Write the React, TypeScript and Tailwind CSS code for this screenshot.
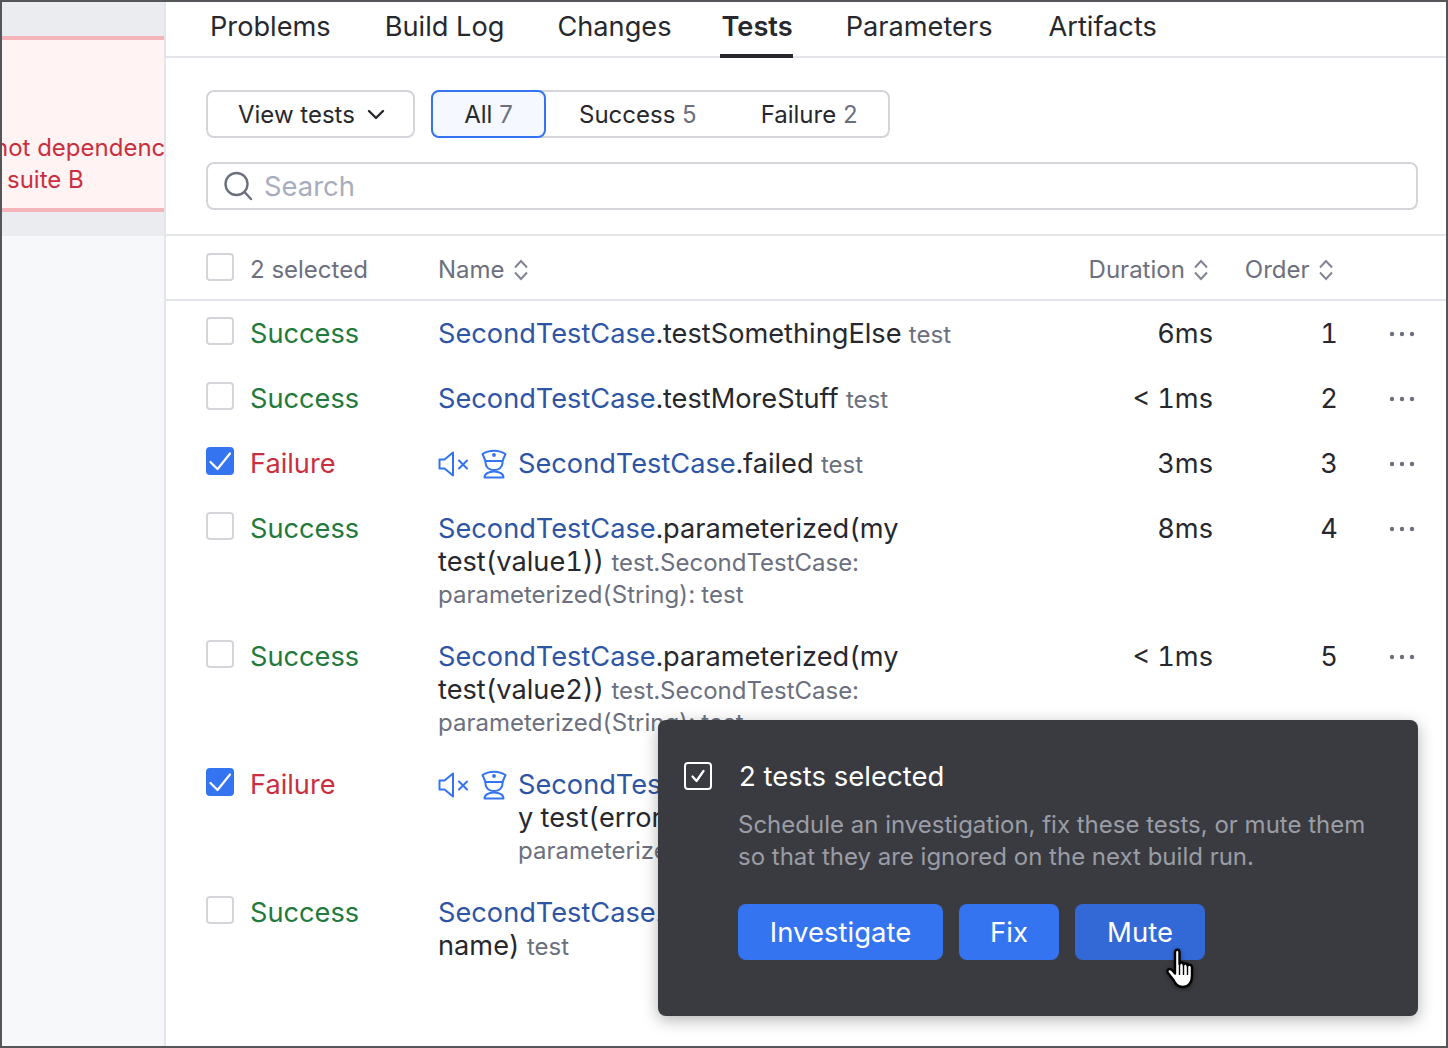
import React from "react";

const Cb = ({ checked }: { checked?: boolean }) =>
  checked ? (
    <div className="w-[28px] h-[28px] rounded-[4px] bg-[#3574f0] shrink-0">
      <svg width="28" height="28" viewBox="0 0 28 28" fill="none" stroke="#fff" strokeWidth="2.2" strokeLinecap="round" strokeLinejoin="round"><path d="M4.5 15 L11.5 22 L24 6.5" /></svg>
    </div>
  ) : (
    <div className="w-[28px] h-[28px] rounded-[4px] border-2 border-[#d3d5db] bg-white shrink-0" />
  );

const Sort = () => (
  <svg width="16" height="24" viewBox="0 0 16 24" fill="none" stroke="#818594" strokeWidth="2" className="ml-[8px]"><path d="M2 9.5 L8 3 L14 9.5" /><path d="M2 14.5 L8 21 L14 14.5" /></svg>
);

const Dots = () => (
  <svg width="26" height="6" viewBox="0 0 26 6" fill="#6c707e"><circle cx="3" cy="3" r="2.2" /><circle cx="13" cy="3" r="2.2" /><circle cx="23" cy="3" r="2.2" /></svg>
);

const Icons = () => (
  <span className="inline-flex items-center w-[80px] h-[33px] align-top shrink-0">
    <svg width="30" height="28" viewBox="0 0 30 28" fill="none" stroke="#3574f0" strokeWidth="2" strokeLinejoin="round" strokeLinecap="round">
      <path d="M1.5 9.5 H6.5 L15 2.5 V25.5 L6.5 18.5 H1.5 Z" />
      <path d="M21 10.5 L29 18.5 M29 10.5 L21 18.5" />
    </svg>
    <svg width="26" height="30" viewBox="0 0 26 30" fill="none" stroke="#3574f0" strokeWidth="2" strokeLinejoin="round" strokeLinecap="round" className="ml-[13px]">
      <path d="M1.5 5 C8 0.5 18 0.5 24.5 5 L21.5 12 H4.5 Z" />
      <circle cx="13" cy="6" r="0.9" fill="#3574f0" />
      <path d="M4.5 12 V14 C4.5 18.5 8.5 21 13 21 C17.5 21 21.5 18.5 21.5 14 V12" />
      <path d="M3.5 28.5 C3.5 25 7.5 22.5 13 22.5 C18.5 22.5 22.5 25 22.5 28.5 Z" />
    </svg>
  </span>
);

const Hand = () => (
  <svg width="32" height="42" viewBox="0 0 32 42" className="absolute left-[1163px] top-[946px] drop-shadow-[0_1px_2px_rgba(0,0,0,0.4)]">
    <path d="M10 4 C10 1 14.5 1 14.5 4 V16 C15 14 18.5 14 18.5 16.5 C19 15 22.5 15 22.5 17.5 C23.5 16 27 16.5 27 19.5 V28 C27 34 24 39 18 39 C12.5 39 10.5 36 8.5 32 L3 25 C1 22 4.5 19.5 7 22 L10 25.5 Z" fill="#fff" stroke="#000" strokeWidth="2.4" strokeLinejoin="round" />
    <path d="M14.5 17 V27 M18.5 17 V27 M22.5 18 V27" stroke="#000" strokeWidth="1.4" />
  </svg>
);

type Row = { ok: boolean; h: string; name: React.ReactNode; dur: string; order: string };

const L = ({ children }: { children: React.ReactNode }) => <span className="text-[#2e55a5]">{children}</span>;
const G = ({ children }: { children: React.ReactNode }) => <span className="text-[#6c707e] text-[24px]">{children}</span>;
const Third = ({ children }: { children: React.ReactNode }) => <span className="block mt-[-1px] text-[#6c707e] text-[24px]">{children}</span>;

const rows: Row[] = [
  { ok: true, h: "h-[65px]", dur: "6ms", order: "1", name: <><L>SecondTestCase</L>.testSomethingElse <G>test</G></> },
  { ok: true, h: "h-[65px]", dur: "< 1ms", order: "2", name: <><L>SecondTestCase</L>.testMoreStuff <G>test</G></> },
  { ok: false, h: "h-[65px]", dur: "3ms", order: "3", name: <><L>SecondTestCase</L>.failed <G>test</G></> },
  { ok: true, h: "h-[128px]", dur: "8ms", order: "4", name: <><L>SecondTestCase</L>.parameterized(my<br />test(value1)) <G>test.SecondTestCase:</G><Third>parameterized(String): test</Third></> },
  { ok: true, h: "h-[128px]", dur: "< 1ms", order: "5", name: <><L>SecondTestCase</L>.parameterized(my<br />test(value2)) <G>test.SecondTestCase:</G><Third>parameterized(String): test</Third></> },
  { ok: false, h: "h-[128px]", dur: "", order: "", name: <><L>SecondTestCase</L>.parameterized(m<br />y test(error)) <G>test.SecondTestCase:</G><Third>parameterized(String): test</Third></> },
  { ok: true, h: "h-[128px]", dur: "", order: "", name: <><L>SecondTestCase</L>.parameterized(my<br />name) <G>test</G></> },
];

const tabs: [string, string][] = [
  ["Problems", ""],
  ["Build Log", ""],
  ["Changes", "ml-[-1px]"],
  ["Tests", "ml-[-6px] pl-[2px] h-[56px] font-semibold border-b-4 border-[#27282e]"],
  ["Parameters", "ml-[-1px]"],
  ["Artifacts", "ml-[2px]"],
];

export default function App() {
  return (
    <div className="relative w-[1448px] h-[1048px] border-2 border-[#555659] bg-white flex overflow-hidden text-[#27282e] text-[27.2px]" style={{ fontFamily: "Inter, sans-serif" }}>
      <aside className="w-[164px] shrink-0 bg-[#f7f8fa] border-r-2 border-[#e4e5ea]">
        <div className="h-[234px] bg-[#ebecf0] pt-[34px]">
          <div className="h-[176px] bg-[#fff3f3] border-y-4 border-[#f4b4ba] pt-[92px] overflow-hidden text-[24px] leading-[32px] text-[#c9303f] whitespace-nowrap">
            <div className="ml-[-8px]">not dependency</div>
            <div className="ml-[5px]">suite B</div>
          </div>
        </div>
      </aside>

      <main className="flex-1 min-w-0 flex flex-col">
        <nav className="h-[56px] border-b-2 border-[#e4e5ea] flex gap-[54px] pl-[44px]">
          {tabs.map(([t, c]) => (
            <div key={t} className={`leading-[50px] ${c}`}>{t}</div>
          ))}
        </nav>

        <section className="h-[178px] border-b-2 border-[#e4e5ea] pl-[40px] pr-[28px] pt-[32px] text-[24px]">
          <div className="flex gap-[16px]">
            <button className="w-[209px] h-[48px] border-2 border-[#d3d5db] rounded-[8px] flex items-center pl-[30px] pt-[2px] gap-[12px]">
              View tests
              <svg width="18" height="11" viewBox="0 0 18 11" fill="none" stroke="#27282e" strokeWidth="2.4" strokeLinecap="round" strokeLinejoin="round" className="mb-[2px]"><path d="M2 2 L9 9 L16 2" /></svg>
            </button>
            <div className="flex h-[48px] w-[459px] border-2 border-[#d3d5db] rounded-[8px] relative">
              <div className="absolute left-[-2px] top-[-2px] w-[115px] h-[48px] pt-[2px] bg-[#f5f8fe] border-2 border-[#3574f0] rounded-[8px] flex items-center justify-center">All&nbsp;<span className="text-[#6c707e]">7</span></div>
              <div className="ml-[146px] leading-[46px]">Success&nbsp;<span className="text-[#6c707e]">5</span></div>
              <div className="ml-[64px] leading-[46px]">Failure&nbsp;<span className="text-[#6c707e]">2</span></div>
            </div>
          </div>
          <div className="mt-[24px] h-[48px] border-2 border-[#d3d5db] rounded-[8px] flex items-center pl-[15px]">
            <svg width="30" height="30" viewBox="0 0 30 30" fill="none" stroke="#6c707e" strokeWidth="2.4" strokeLinecap="round"><circle cx="13.5" cy="13" r="11" /><path d="M21.5 21 L28 28" /></svg>
            <span className="ml-[11px] pt-[2px] text-[27.4px] text-[#a8adbd]">Search</span>
          </div>
        </section>

        <div className="h-[65px] border-b-2 border-[#e4e5ea] flex items-center pl-[40px] text-[24px] text-[#6c707e]">
          <div className="mt-[-2px] shrink-0"><Cb /></div>
          <span className="ml-[16px] w-[188px] pt-[4px]">2 selected</span>
          <span className="flex items-center pt-[4px]">Name<Sort /></span>
          <span className="flex items-center pt-[4px] ml-[560px]">Duration<Sort /></span>
          <span className="flex items-center pt-[4px] ml-[36px]">Order<Sort /></span>
        </div>

        {rows.map((r, i) => (
          <div key={i} className={`${r.h} flex pl-[40px] pt-[16px] leading-[33px] tabular-nums`}>
            <Cb checked={!r.ok} />
            <span className={`ml-[16px] w-[188px] shrink-0 ${r.ok ? "text-[#1f7a3c]" : "text-[#c9303f]"}`}>{r.ok ? "Success" : "Failure"}</span>
            <div className="w-[641px] shrink-0 flex">
              {!r.ok && <Icons />}
              <div className="whitespace-nowrap">{r.name}</div>
            </div>
            <div className="w-[134px] shrink-0 text-right">{r.dur}</div>
            <div className="w-[125px] shrink-0 text-right">{r.order}</div>
            <div className="ml-[51px] pt-[14px] h-[33px] leading-none">{r.dur && <Dots />}</div>
          </div>
        ))}
      </main>

      <div className="absolute left-[656px] top-[718px] w-[760px] h-[296px] bg-[#3a3b40] rounded-[8px] shadow-[0_4px_16px_rgba(0,0,0,0.3)] pl-[26px] pt-[40px] text-[27.5px]">
        <div className="flex items-center h-[32px]">
          <div className="w-[28px] h-[28px] border-2 border-white rounded-[4px] flex items-center justify-center">
            <svg width="14" height="14" viewBox="0 0 14 14" fill="none" stroke="#fff" strokeWidth="2.2" strokeLinecap="round" strokeLinejoin="round"><path d="M1.5 7.5 L5.5 12 L12.5 2" /></svg>
          </div>
          <span className="ml-[27px] pt-[2px] text-white">2 tests selected</span>
        </div>
        <p className="ml-[54px] mt-[17px] text-[24px] leading-[32px] text-[#9a9da6]">Schedule an investigation, fix these tests, or mute them<br />so that they are ignored on the next build run.</p>
        <div className="ml-[54px] mt-[31px] flex gap-[16px] text-white">
          <button className="w-[205px] h-[56px] pt-[2px] rounded-[8px] bg-[#3574f0]">Investigate</button>
          <button className="w-[100px] h-[56px] pt-[2px] rounded-[8px] bg-[#3574f0]">Fix</button>
          <button className="w-[130px] h-[56px] pt-[2px] rounded-[8px] bg-[#3369d6]">Mute</button>
        </div>
      </div>
      <Hand />
    </div>
  );
}
